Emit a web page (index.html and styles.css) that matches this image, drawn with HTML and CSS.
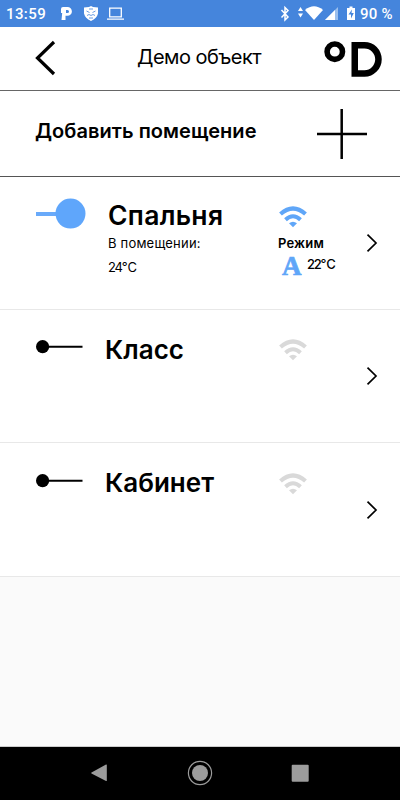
FILE: index.html
```html
<!DOCTYPE html>
<html lang="ru">
<head>
<meta charset="utf-8">
<meta name="viewport" content="width=device-width, initial-scale=1">
<title>Демо объект</title>
<link rel="stylesheet" href="styles.css">
</head>
<body>
<svg class="symbols" width="0" height="0">
  <symbol id="wifi" viewBox="0 0 30 22">
    <path d="M2.500 8Q15 -3 27.500 8" fill="none" stroke="currentColor" stroke-width="4.200"/>
    <path d="M7.500 13.700Q15 6.800 22.500 13.700" fill="none" stroke="currentColor" stroke-width="4"/>
    <path d="M11 17.300Q15 14 19 17.300L15 21.300Z" fill="currentColor"/>
  </symbol>
  <symbol id="chevron" viewBox="0 0 12 20">
    <path d="M1.500 1.700L10 10L1.500 18.300" fill="none" stroke="#000" stroke-width="1.700"/>
  </symbol>
  <symbol id="switch-off" viewBox="0 0 50 14">
    <path d="M7 6.700H46.500" stroke="#000" stroke-width="2"/><circle cx="6.600" cy="6.700" r="6.600"/>
  </symbol>
</svg>
<header class="status">
  <span class="time">13:59</span>
  <svg class="status-left" viewBox="0 0 64 20" width="64" height="20" fill="#fff">
    <path fill-rule="evenodd" d="M3 4H7.500a4.400 4.400 0 0 1 0 8.800H5.500V17H1.500L2.200 10H1V6Q1 4 3 4ZM6 7V10H7.500a1.500 1.500 0 0 0 0-3Z"/>
    <path d="M31 3L33 4L38 4.500V10.500Q37 15 31 18Q25 15 24 10.500V4.500L29 4Z"/>
    <path d="M26.500 8l3 1.500M35.500 8l-3 1.500M27 12.500l2-1 2 1 2-1 2 1M29 15h4M29 6h4" stroke="#4585dc" stroke-width=".8" fill="none"/>
    <path d="M49.700 5.200H61.300V13.800H49.700ZM47 16.200H64" stroke="#fff" stroke-width="1.300" fill="none"/>
  </svg>
  <svg class="status-right" viewBox="0 0 80 20" width="80" height="20" fill="#fff">
    <path d="M3.500 7L10 14L7 17V4.500L10 7.500L3.500 14.500" fill="none" stroke="#fff" stroke-width="1.500"/>
    <path d="M20 8L22.500 4L25 8ZM20 10.500L22.500 14.500L25 10.500Z"/>
    <path d="M27 7Q36 -.5 45 7L36 17Z"/>
    <path d="M47 17L60 4V17Z" fill="#9bbfed"/><path d="M47 17L57 7V17Z"/>
    <path d="M69 5H71.500V3.500H74.500V5H77V17H69Z"/><path d="M74 6.500L70.500 11.500H73V15.500L75.800 10H73.500Z" fill="#4585dc"/>
  </svg>
  <span class="battery">90 %</span>
</header>
<nav class="topbar">
  <svg class="back" viewBox="0 0 22 36" width="22" height="36"><path d="M20 2L3.500 18L20 34" fill="none" stroke="#000" stroke-width="3.200"/></svg>
  <h1>Демо объект</h1>
  <svg class="logo" viewBox="0 0 60 38" width="60" height="38"><circle cx="10.800" cy="11.700" r="7.700" fill="none" stroke="#000" stroke-width="5.600"/><path fill-rule="evenodd" d="M27.500 2H40.500A17.200 17.300 0 0 1 40.500 36.700H27.500ZM34 8.500V30.200H40.500A10.700 10.850 0 0 0 40.500 8.500Z"/></svg>
</nav>
<section class="add">
  <span>Добавить помещение</span>
  <svg viewBox="0 0 50 50" width="50" height="50"><path d="M24.700 0V50M0 25H50" stroke="#000" stroke-width="2.500"/></svg>
</section>
<main>
  <article class="room active">
    <svg class="switch" viewBox="0 0 50 32" width="50" height="32"><path d="M0 17H24" stroke="#69aafa" stroke-width="4"/><circle cx="34.500" cy="16.600" r="15" fill="#5fa6fb"/></svg>
    <div class="info"><h2 class="bedroom">Спальня</h2><p class="label">В помещении:</p><p class="temp">24℃</p></div>
    <div class="mode"><svg class="wifi on"><use href="#wifi"/></svg><strong>Режим</strong><div class="target"><b>A</b><span>22℃</span></div></div>
    <svg class="chevron"><use href="#chevron"/></svg>
  </article>
  <article class="room">
    <svg class="switch off"><use href="#switch-off"/></svg>
    <div class="info"><h2>Класс</h2></div>
    <div class="mode"><svg class="wifi"><use href="#wifi"/></svg></div>
    <svg class="chevron"><use href="#chevron"/></svg>
  </article>
  <article class="room last">
    <svg class="switch off"><use href="#switch-off"/></svg>
    <div class="info"><h2>Кабинет</h2></div>
    <div class="mode"><svg class="wifi"><use href="#wifi"/></svg></div>
    <svg class="chevron"><use href="#chevron"/></svg>
  </article>
</main>
<footer class="navigation">
  <svg viewBox="0 0 26 26" width="26" height="26"><path d="M5.500 12.400L20 4.500Q20.800 4.200 20.800 5V20.500Q20.800 21.400 20 21L5.500 13.400Q4.700 12.900 5.500 12.400Z" fill="#9c9c9c"/></svg>
  <svg viewBox="0 0 26 26" width="26" height="26"><circle cx="13" cy="13" r="11.600" fill="none" stroke="#9c9c9c" stroke-width="1.200"/><circle cx="13" cy="13" r="8" fill="#9c9c9c"/></svg>
  <svg viewBox="0 0 26 26" width="26" height="26"><rect x="4.700" y="4.800" width="17" height="17" rx="1" fill="#9c9c9c"/></svg>
</footer>
</body>
</html>
```
FILE: styles.css
```css
* { box-sizing: border-box; }
body {
  display: flex;
  flex-direction: column;
  height: 800px;
  margin: 0;
  overflow: hidden;
  background: #fafafa;
  color: #000;
  font-family: Inter, "Liberation Sans", sans-serif;
}
h1, h2, p { margin: 0; }
svg { display: block; flex: none; }
.symbols { position: absolute; }
.status {
  display: flex;
  flex: none;
  height: 27px;
  padding: 3px 7px 0 6px;
  background: #4585dc;
  color: #fff;
  font: 500 15px/23px Roboto, sans-serif;
  white-space: nowrap;
}
.time { width: 54px; letter-spacing: .4px; }
.status-right { margin-left: auto; }
.battery { width: 33px; margin-left: 2px; letter-spacing: .2px; }
.topbar {
  display: grid;
  grid-template-columns: 103px 187px 60px;
  flex: none;
  height: 64px;
  padding: 13px 0 0 34px;
  border-bottom: 1px solid #666;
  background: #fff;
}
h1 { font-size: 20px; font-weight: 400; line-height: 34px; letter-spacing: -.5px; white-space: nowrap; }
.add {
  display: flex;
  justify-content: space-between;
  flex: none;
  height: 86px;
  padding: 17px 33px 0 35px;
  border-bottom: 1px solid #555;
  background: #fff;
  font-size: 20px;
  font-weight: 600;
  line-height: 47px;
  letter-spacing: .05px;
  white-space: nowrap;
}
.add svg { margin-top: 1px; }
.room {
  display: grid;
  grid-template-columns: 69px 173px 88px 14px;
  height: 133px;
  padding: 20px 0 0 36px;
  border-bottom: 1px solid #e8e8e8;
  background: #fff;
}
.room.last { height: 134px; }
.switch.off { width: 50px; height: 14px; margin-top: 10px; }
.last .switch { margin-top: 11px; }
.info { padding-top: 4px; }
.active .info { padding: 3px 0 0 3px; }
h2 { font-size: 26px; font-weight: 600; line-height: 32px; white-space: nowrap; }
.bedroom { font-size: 26.500px; line-height: 31px; margin-bottom: 1px; letter-spacing: .3px; }
.label, .temp { font-size: 13px; line-height: 22px; }
.label { letter-spacing: .2px; }
.temp { margin-top: 2px; letter-spacing: -1.2px; }
.mode { font-size: 13px; }
.wifi { width: 30px; height: 22px; margin-top: 9px; color: #d9d9d9; }
.last .wifi { margin-top: 10px; }
.wifi.on { color: #5fa6f8; }
.mode strong { display: block; font-weight: 600; line-height: 22px; margin-top: 4px; letter-spacing: .2px; }
.target { display: flex; padding-left: 4px; font-weight: 500; line-height: 20px; letter-spacing: -1.300px; white-space: nowrap; }
.target b { width: 25px; color: #5fa6f8; font: bold 27px/24px "Liberation Serif", serif; -webkit-text-stroke: .7px #5fa6f8; }
.chevron { width: 12px; height: 20px; margin-top: 36px; }
.last .chevron { margin-top: 37px; }
.navigation {
  display: flex;
  justify-content: space-between;
  height: 54px;
  margin-top: auto;
  padding: 13px 87px 0 86px;
  border-top: 1px solid #ccc;
  background: #000;
}
```
